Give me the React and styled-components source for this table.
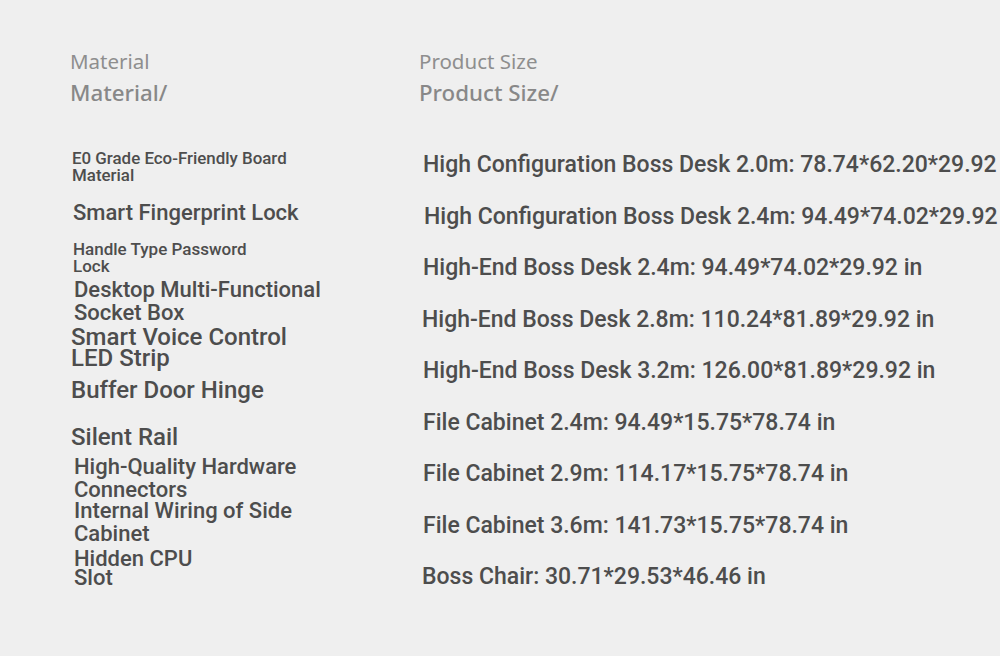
import React from 'react';
import styled, { createGlobalStyle } from 'styled-components';

const GlobalStyle = createGlobalStyle`
  html, body {
    margin: 0;
    padding: 0;
    background: #efefef;
  }
`;

const Page = styled.div`
  width: 1000px;
  height: 656px;
  background: #efefef;
  overflow: hidden;
  display: grid;
  grid-template-columns: 349px 1fr;
  padding-left: 70px;
  box-sizing: border-box;
  font-family: Roboto, "Liberation Sans", sans-serif;
  color: #4d4d4d;
`;

const Column = styled.div`
  display: flex;
  flex-direction: column;
  padding-top: 48px;
`;

const Label = styled.div`
  font-family: "Noto Sans", "Open Sans", sans-serif;
  font-size: 20.5px;
  line-height: 26px;
  color: #8e8e8e;
  white-space: nowrap;
`;

const Title = styled.div`
  font-family: "Noto Sans", "Open Sans", sans-serif;
  font-size: 22.3px;
  font-weight: 500;
  line-height: 28px;
  margin-top: 5px;
  color: #888888;
  white-space: nowrap;
`;

const FeatureList = styled.div`
  display: flex;
  flex-direction: column;
  margin-top: 43px;
`;

const Feature = styled.div`
  font-size: ${p => p.size}px;
  line-height: ${p => p.lh}px;
  margin-top: ${p => p.gap}px;
  padding-left: ${p => p.indent}px;
  width: ${p => p.w}px;
  font-weight: 500;
`;

const SizeList = styled.div`
  display: flex;
  flex-direction: column;
  margin-top: 32px;
`;

const SizeRow = styled.div`
  height: 51.5px;
  line-height: 51.5px;
  font-size: 23px;
  font-weight: 500;
  white-space: nowrap;
  padding-left: ${p => p.indent}px;
`;

const features = [
  { text: 'E0 Grade Eco-Friendly Board Material', size: 16.9, lh: 17, gap: 0, indent: 2, w: 250 },
  { text: 'Smart Fingerprint Lock', size: 22, lh: 24, gap: 16.5, indent: 3, w: 300 },
  { text: 'Handle Type Password Lock', size: 17, lh: 17, gap: 16.5, indent: 3, w: 200 },
  { text: 'Desktop Multi-Functional Socket Box', size: 22, lh: 23, gap: 3, indent: 4, w: 270 },
  { text: 'Smart Voice Control LED Strip', size: 24, lh: 21, gap: 3, indent: 1, w: 240 },
  { text: 'Buffer Door Hinge', size: 24, lh: 24, gap: 8.5, indent: 1, w: 300 },
  { text: 'Silent Rail', size: 24, lh: 24, gap: 23, indent: 1, w: 300 },
  { text: 'High-Quality Hardware Connectors', size: 22, lh: 23, gap: 6.5, indent: 4, w: 250 },
  { text: 'Internal Wiring of Side Cabinet', size: 22, lh: 23, gap: -2, indent: 4, w: 250 },
  { text: 'Hidden CPU Slot', size: 22, lh: 19, gap: 4, indent: 4, w: 140 },
];

const sizes = [
  { text: 'High Configuration Boss Desk 2.0m: 78.74*62.20*29.92 in', indent: 4 },
  { text: 'High Configuration Boss Desk 2.4m: 94.49*74.02*29.92 in', indent: 5 },
  { text: 'High-End Boss Desk 2.4m: 94.49*74.02*29.92 in', indent: 4 },
  { text: 'High-End Boss Desk 2.8m: 110.24*81.89*29.92 in', indent: 3 },
  { text: 'High-End Boss Desk 3.2m: 126.00*81.89*29.92 in', indent: 4 },
  { text: 'File Cabinet 2.4m: 94.49*15.75*78.74 in', indent: 4 },
  { text: 'File Cabinet 2.9m: 114.17*15.75*78.74 in', indent: 4 },
  { text: 'File Cabinet 3.6m: 141.73*15.75*78.74 in', indent: 4 },
  { text: 'Boss Chair: 30.71*29.53*46.46 in', indent: 3 },
];

const App = () => {
  return (
    <>
      <GlobalStyle />
      <Page>
        <Column>
          <Label>Material</Label>
          <Title>Material/</Title>
          <FeatureList>
            {features.map(f => (
              <Feature key={f.text} size={f.size} lh={f.lh} gap={f.gap} indent={f.indent} w={f.w}>
                {f.text}
              </Feature>
            ))}
          </FeatureList>
        </Column>
        <Column>
          <Label>Product Size</Label>
          <Title>Product Size/</Title>
          <SizeList>
            {sizes.map(s => (
              <SizeRow key={s.text} indent={s.indent}>{s.text}</SizeRow>
            ))}
          </SizeList>
        </Column>
      </Page>
    </>
  );
};

export default App;
